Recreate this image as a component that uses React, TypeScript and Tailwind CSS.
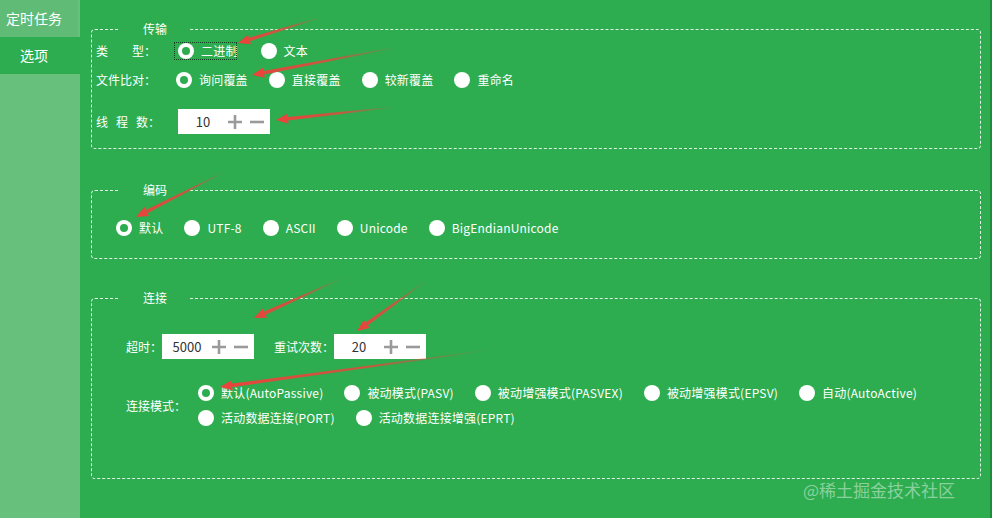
import React from "react";

function Radio({ label, checked }: { label: string; checked?: boolean }) {
  return (
    <div className="flex items-center h-[24px]">
      <div className="w-[16px] h-[16px] rounded-full bg-white flex items-center justify-center shrink-0">
        {checked && <div className="w-[8px] h-[8px] rounded-full bg-[#2dad4f]" />}
      </div>
      <span className="ml-[7px] text-[12px] tracking-[0.2px] text-white whitespace-nowrap">{label}</span>
    </div>
  );
}

function Stepper({ value }: { value: string }) {
  return (
    <div className="w-[92px] h-[25px] bg-white flex items-center shrink-0">
      <span className="w-[50px] text-center text-[13px] text-[#333]">{value}</span>
      <svg width="14" height="14" viewBox="0 0 14 14" className="shrink-0">
        <path d="M7 0v14M0 7h14" stroke="#9a9a9a" strokeWidth="2.6" />
      </svg>
      <svg width="14" height="14" viewBox="0 0 14 14" className="ml-[8px] shrink-0">
        <path d="M0 7h14" stroke="#9a9a9a" strokeWidth="2.6" />
      </svg>
    </div>
  );
}

function Group({ title, children }: { title: string; children: any }) {
  return (
    <fieldset className="border border-dashed border-white/85 rounded-[4px] px-0">
      <legend className="ml-[28px] px-[23px] text-[12px] leading-[16px] text-white">{title}</legend>
      {children}
    </fieldset>
  );
}

const arrows: [number, number, number, number][] = [
  [322, 17, 238, 43],
  [398, 47, 252, 75],
  [395, 107, 276, 120],
  [228, 170, 136, 217],
  [345, 277, 254, 318],
  [427, 280, 357, 331],
  [490, 350, 220, 387],
];

function Arrows() {
  return (
    <svg className="absolute inset-0 pointer-events-none" width="992" height="518">
      <defs>
        {arrows.map(([x1, y1, x2, y2], i) => (
          <linearGradient key={i} id={"ag" + i} gradientUnits="userSpaceOnUse" x1={x1} y1={y1} x2={x2} y2={y2}>
            <stop offset="0" stopColor="#e8453c" stopOpacity="0" />
            <stop offset="0.45" stopColor="#e8453c" stopOpacity="0.8" />
            <stop offset="1" stopColor="#e8453c" />
          </linearGradient>
        ))}
      </defs>
      {arrows.map(([x1, y1, x2, y2], i) => {
        const len = Math.hypot(x2 - x1, y2 - y1);
        const dx = (x2 - x1) / len;
        const dy = (y2 - y1) / len;
        const nx = -dy;
        const ny = dx;
        const bx = x2 - dx * 12;
        const by = y2 - dy * 12;
        const shaft = [
          [x1 + nx * 0.4, y1 + ny * 0.4],
          [bx + nx * 1.8, by + ny * 1.8],
          [bx - nx * 1.8, by - ny * 1.8],
          [x1 - nx * 0.4, y1 - ny * 0.4],
        ];
        const head = [
          [x2, y2],
          [bx + nx * 5, by + ny * 5],
          [bx - nx * 5, by - ny * 5],
        ];
        return (
          <g key={i}>
            <polygon points={shaft.map((p) => p.join(",")).join(" ")} fill={"url(#ag" + i + ")"} />
            <polygon points={head.map((p) => p.join(",")).join(" ")} fill="#e8453c" />
          </g>
        );
      })}
    </svg>
  );
}

export default function App() {
  return (
    <div className="relative flex w-full h-screen overflow-hidden font-['Microsoft_YaHei','Noto_Sans_CJK_SC',sans-serif]">
      <div className="w-[80px] bg-[#67c07b] shrink-0 text-[14px] text-white">
        <div className="h-[37px] w-[78px] bg-[#5fbb75] flex items-center pl-[6px]">定时任务</div>
        <div className="h-[37px] bg-[#2dad4f] flex items-center pl-[20px]">选项</div>
      </div>
      <div className="flex-1 bg-[#2dad4f] pt-[21px] pl-[11px] pr-[9px] border-r-2 border-[#1f8c3c] flex flex-col">
        <Group title="传输">
          <div className="pl-[4px] pt-[2px] pb-[14px] flex flex-col">
            <div className="flex items-center">
              <span className="w-[80px] text-[12px] text-white whitespace-pre">类{"\u3000\u3000"}型：</span>
              <div className="flex items-center gap-[21px] -ml-[5px]">
                <div className="pl-[7px] pr-[2px] outline-1 outline-dotted outline-[#163f22] outline-offset-[-4px]">
                  <Radio label="二进制" checked />
                </div>
                <Radio label="文本" />
              </div>
            </div>
            <div className="flex items-center mt-[5px]">
              <span className="w-[80px] text-[12px] text-white">文件比对：</span>
              <div className="flex items-center gap-[21px]">
                <Radio label="询问覆盖" checked />
                <Radio label="直接覆盖" />
                <Radio label="较新覆盖" />
                <Radio label="重命名" />
              </div>
            </div>
            <div className="flex items-center mt-[17px]">
              <span className="w-[82px] flex text-[12px] text-white">
                <span className="mr-[8px]">线</span>
                <span className="mr-[8px]">程</span>
                <span>数：</span>
              </span>
              <Stepper value="10" />
            </div>
          </div>
        </Group>

        <div className="mt-[33px]">
          <Group title="编码">
            <div className="pl-[24px] pt-[18px] pb-[18px] flex items-center gap-[21px]">
              <Radio label="默认" checked />
              <Radio label="UTF-8" />
              <Radio label="ASCII" />
              <Radio label="Unicode" />
              <Radio label="BigEndianUnicode" />
            </div>
          </Group>
        </div>

        <div className="mt-[31px]">
          <Group title="连接">
            <div className="pl-[34px] pt-[28px] pb-[48px] flex flex-col">
              <div className="flex items-center text-[12px] text-white">
                <span className="w-[36px]">超时：</span>
                <Stepper value="5000" />
                <span className="ml-[20px] w-[60px]">重试次数：</span>
                <Stepper value="20" />
              </div>
              <div className="flex items-center mt-[22px]">
                <span className="w-[72px] text-[12px] text-white">连接模式：</span>
                <div className="flex flex-col gap-[1px]">
                  <div className="flex items-center gap-[21px]">
                    <Radio label="默认(AutoPassive)" checked />
                    <Radio label="被动模式(PASV)" />
                    <Radio label="被动增强模式(PASVEX)" />
                    <Radio label="被动增强模式(EPSV)" />
                    <Radio label="自动(AutoActive)" />
                  </div>
                  <div className="flex items-center gap-[21px]">
                    <Radio label="活动数据连接(PORT)" />
                    <Radio label="活动数据连接增强(EPRT)" />
                  </div>
                </div>
              </div>
            </div>
          </Group>
        </div>
      </div>
      <div className="absolute right-[37px] bottom-[16px] text-[17px] text-white/45 pointer-events-none">
        @稀土掘金技术社区
      </div>
      <Arrows />
    </div>
  );
}
